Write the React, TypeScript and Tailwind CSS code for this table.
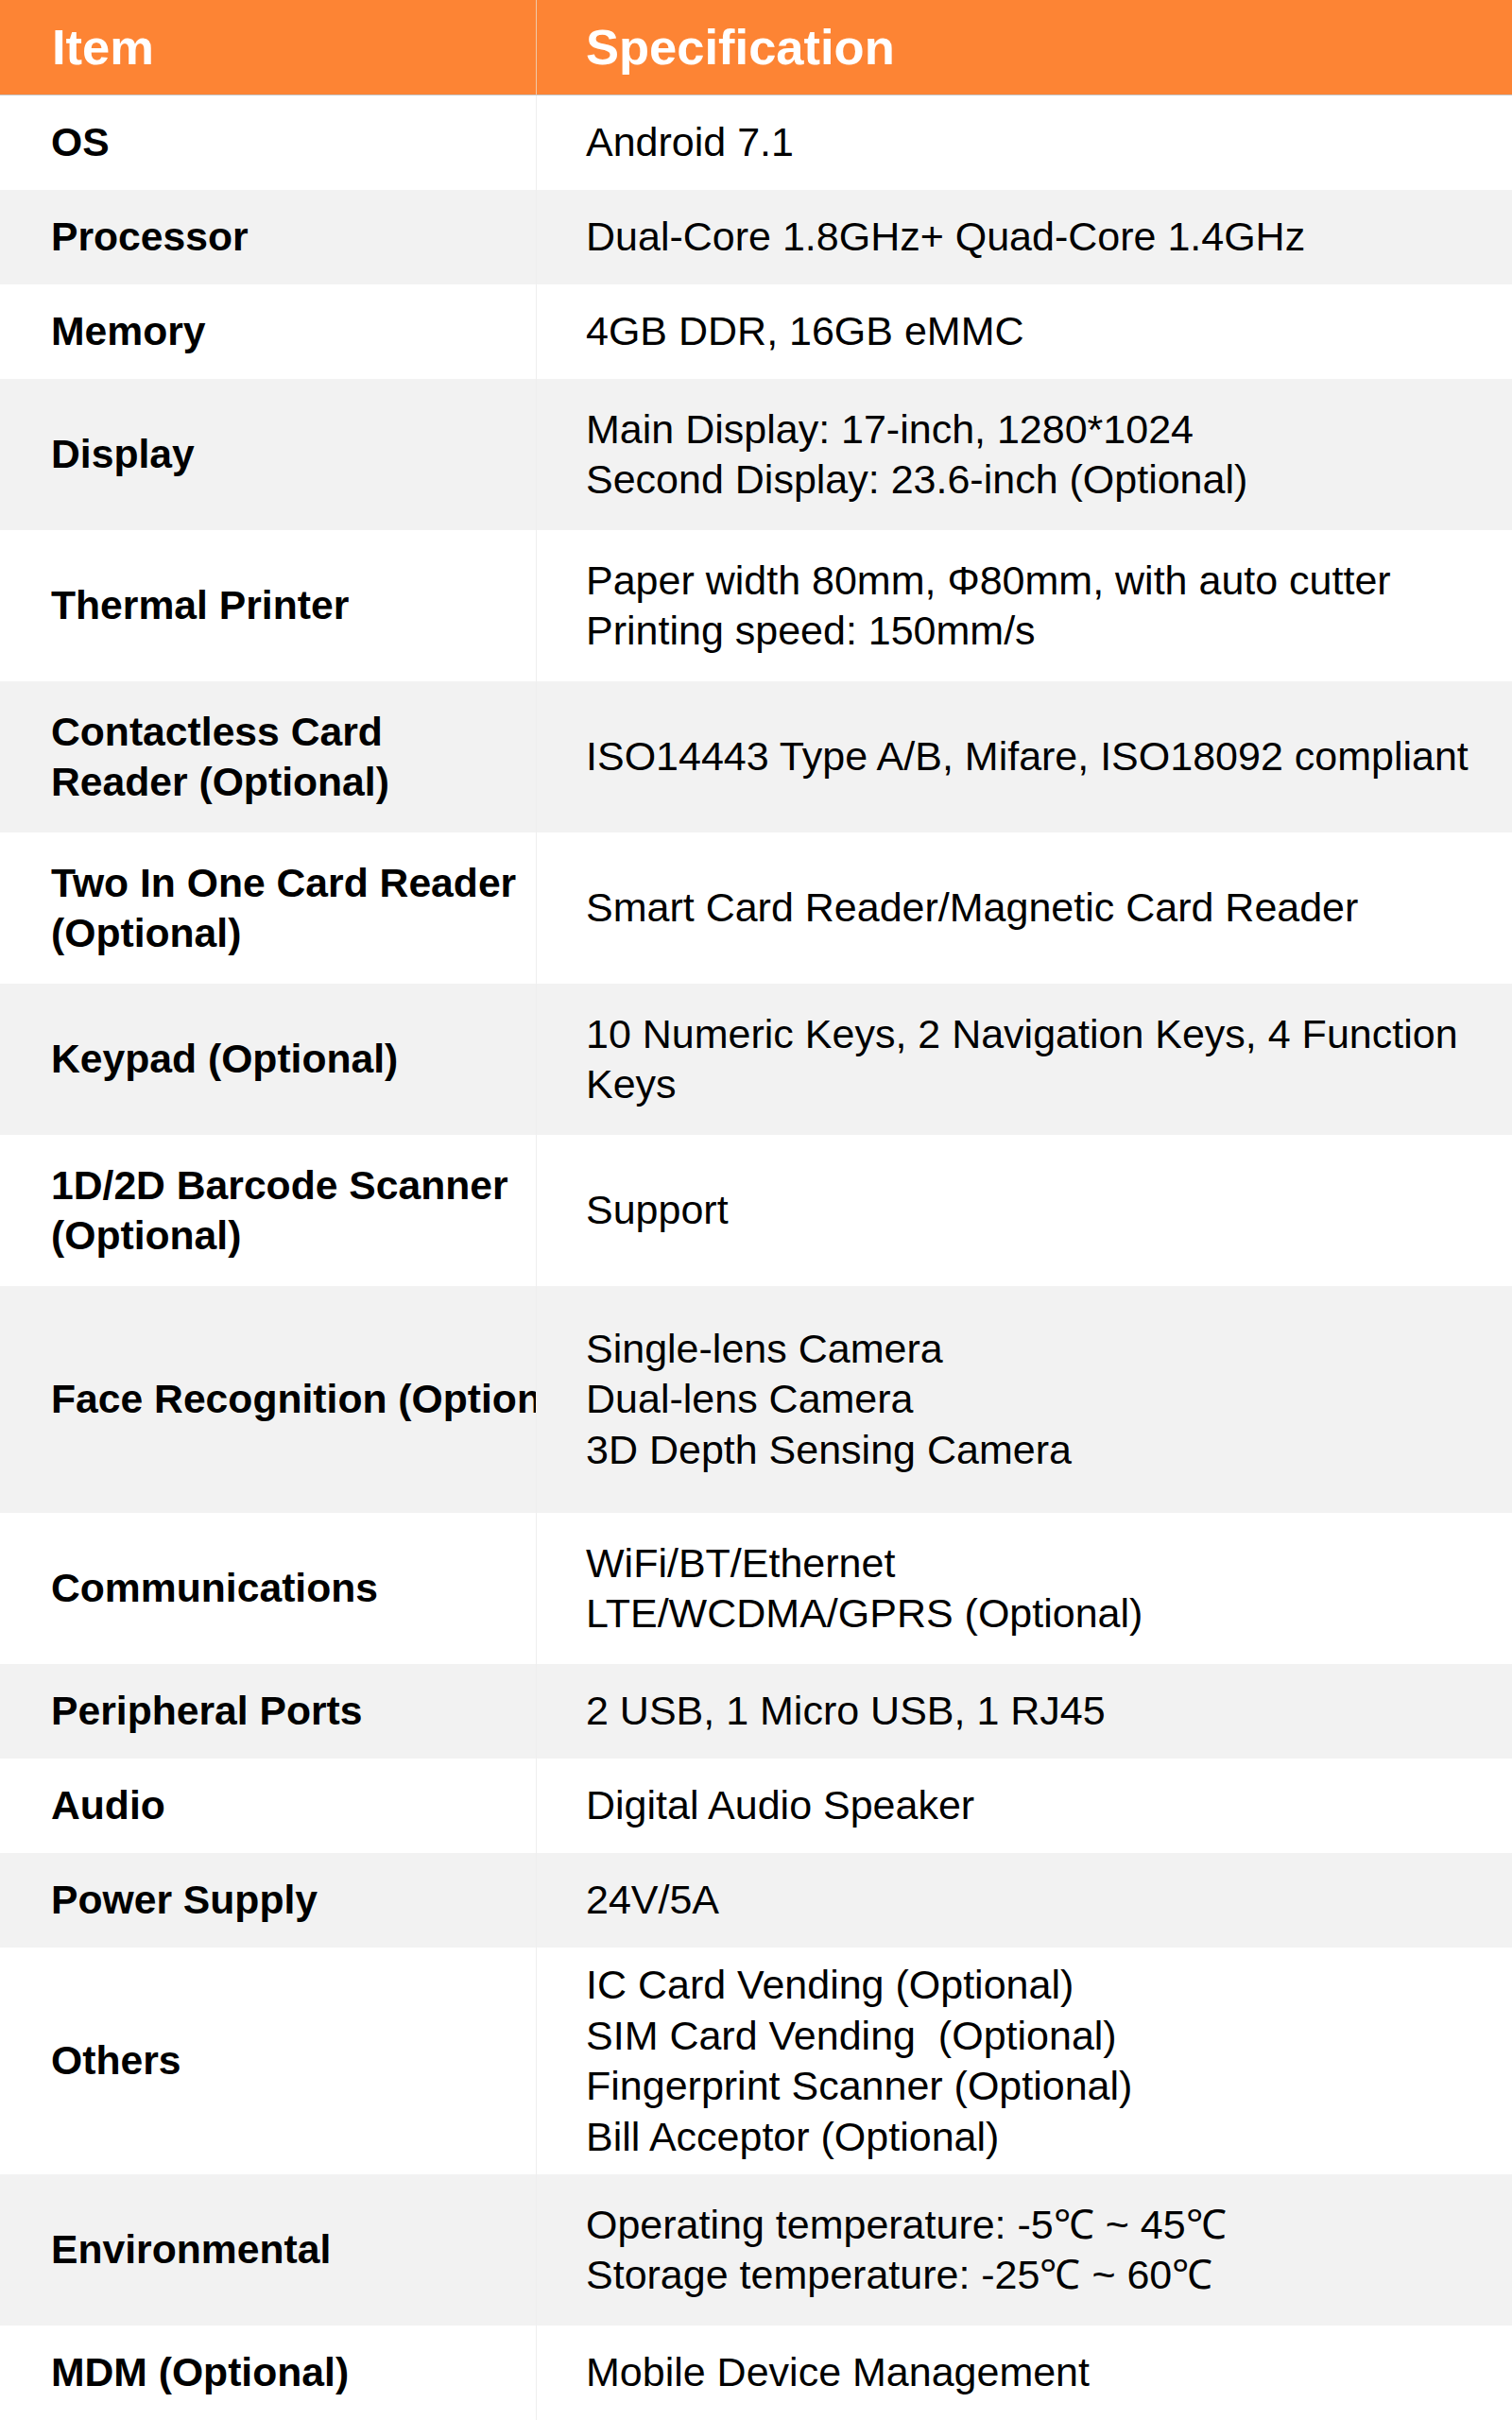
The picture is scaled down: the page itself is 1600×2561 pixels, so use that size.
import React from "react";

type Row = { item: string[]; spec: string[]; h: string; gray: boolean; clip?: boolean };

const rows: Row[] = [
  { item: ["OS"], spec: ["Android 7.1"], h: "h-[100px]", gray: false },
  { item: ["Processor"], spec: ["Dual-Core 1.8GHz+ Quad-Core 1.4GHz"], h: "h-[100px]", gray: true },
  { item: ["Memory"], spec: ["4GB DDR, 16GB eMMC"], h: "h-[100px]", gray: false },
  { item: ["Display"], spec: ["Main Display: 17-inch, 1280*1024", "Second Display: 23.6-inch (Optional)"], h: "h-[160px]", gray: true },
  { item: ["Thermal Printer"], spec: ["Paper width 80mm, \u03A680mm, with auto cutter", "Printing speed: 150mm/s"], h: "h-[160px]", gray: false },
  { item: ["Contactless Card", "Reader (Optional)"], spec: ["ISO14443 Type A/B, Mifare, ISO18092 compliant"], h: "h-[160px]", gray: true },
  { item: ["Two In One Card Reader", "(Optional)"], spec: ["Smart Card Reader/Magnetic Card Reader"], h: "h-[160px]", gray: false },
  { item: ["Keypad (Optional)"], spec: ["10 Numeric Keys, 2 Navigation Keys, 4 Function", "Keys"], h: "h-[160px]", gray: true },
  { item: ["1D/2D Barcode Scanner", "(Optional)"], spec: ["Support"], h: "h-[160px]", gray: false },
  { item: ["Face Recognition (Optional)"], spec: ["Single-lens Camera", "Dual-lens Camera", "3D Depth Sensing Camera"], h: "h-[240px]", gray: true, clip: true },
  { item: ["Communications"], spec: ["WiFi/BT/Ethernet", "LTE/WCDMA/GPRS (Optional)"], h: "h-[160px]", gray: false },
  { item: ["Peripheral Ports"], spec: ["2 USB, 1 Micro USB, 1 RJ45"], h: "h-[100px]", gray: true },
  { item: ["Audio"], spec: ["Digital Audio Speaker"], h: "h-[100px]", gray: false },
  { item: ["Power Supply"], spec: ["24V/5A"], h: "h-[100px]", gray: true },
  { item: ["Others"], spec: ["IC Card Vending (Optional)", "SIM Card Vending\u00A0 (Optional)", "Fingerprint Scanner (Optional)", "Bill Acceptor (Optional)"], h: "h-[240px]", gray: false },
  { item: ["Environmental"], spec: ["Operating temperature: -5\u2103 ~ 45\u2103", "Storage temperature: -25\u2103 ~ 60\u2103"], h: "h-[160px]", gray: true },
  { item: ["MDM (Optional)"], spec: ["Mobile Device Management"], h: "h-[100px]", gray: false },
];

export default function App() {
  return (
    <div
      className="w-[1600px] bg-white text-black"
      style={{ fontFamily: '"Liberation Sans", Arial, sans-serif' }}
    >
      <div className="flex h-[101px] bg-[#fd8434] border-b border-[#c4c4c4] text-white font-bold text-[52.5px]">
        <div className="w-[567px] shrink-0 flex items-center pl-[55px]">Item</div>
        <div className="flex-1 flex items-center pl-[52px] border-l border-[#f0c8a8]">Specification</div>
      </div>
      {rows.map((r, i) => (
        <div
          key={i}
          className={`flex ${r.h} ${r.gray ? "bg-[#f2f2f2]" : "bg-white"} leading-[53.5px]`}
        >
          <div
            className={`w-[567px] shrink-0 flex items-center pl-[54px] font-bold text-[42.67px] whitespace-nowrap ${
              r.clip ? "overflow-hidden" : ""
            }`}
          >
            <div>
              {r.item.map((t, j) => (
                <div key={j}>{t}</div>
              ))}
            </div>
          </div>
          <div className="flex-1 flex items-center pl-[52px] text-[43px] border-l border-[#efefef] whitespace-nowrap">
            <div>
              {r.spec.map((t, j) => (
                <div key={j} className="whitespace-pre">{t}</div>
              ))}
            </div>
          </div>
        </div>
      ))}
    </div>
  );
}
